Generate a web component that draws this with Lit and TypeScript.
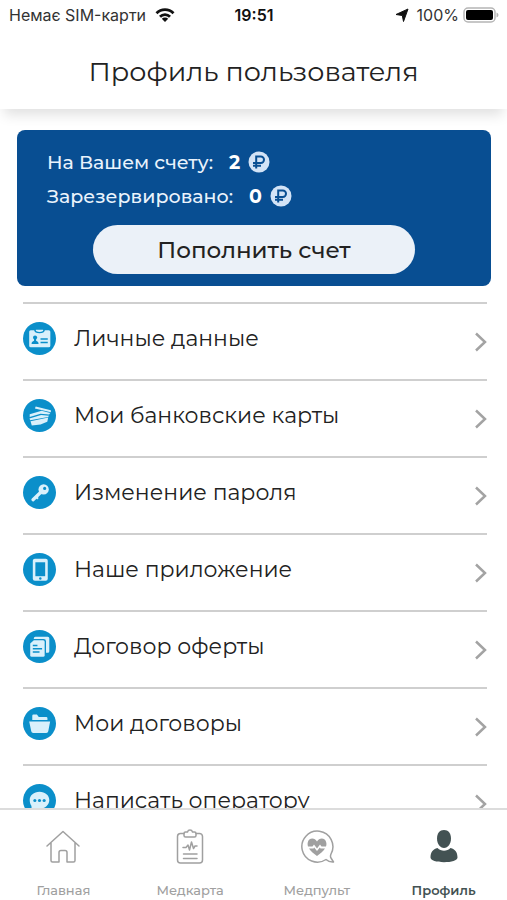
import { LitElement, html, css, svg } from "lit";
import { customElement } from "lit/decorators.js";
import { classMap } from "lit/directives/class-map.js";

const ruble = html`<svg class="ruble" viewBox="0 0 22 22" role="img" aria-label="рублей">
  <circle cx="11" cy="11" r="10.5" fill="#d3e3f6" />
  <path d="M8.200 17.500V5.600h4.600a3.200 3.200 0 0 1 0 6.400H5M5 14.800h8" fill="none" stroke="#084e92" stroke-width="2" />
</svg>`;

const rows = [
  {
    label: "Личные данные",
    art: svg`<path fill="#d9f0fb" d="M7.500 8h3.300c.4 1.800 1.800 3 5.200 3s4.800-1.200 5.200-3h3.800a1.500 1.500 0 0 1 1.500 1.500v13.500a1.500 1.500 0 0 1-1.500 1.500h-17.500A1.500 1.500 0 0 1 6 23V9.500A1.500 1.500 0 0 1 7.500 8z"/>
      <path fill="#d9f0fb" d="M12.500 7.500h7v1.200q-3.500 2-7 0z"/>
      <circle cx="11.700" cy="15" r="2" fill="#0b8fca"/><path fill="#0b8fca" d="M8.300 21.300c0-2 1.300-2.500 2.400-3v-2h2v2c1.100.5 2.400 1 2.400 3z"/>
      <path stroke="#0b8fca" stroke-width="1.500" d="M17 16.500h7M17 19.800h7"/>`,
  },
  {
    label: "Мои банковские карты",
    art: svg`<path fill="#d9f0fb" d="M12.300 7.200l14.700 3.600v2L11.500 9.300z"/>
      <path fill="#d9f0fb" d="M6.500 14.800l11.500-3.300 8.500 2-1.200 1.500-8.300-.8L6.500 17.500z"/>
      <path fill="#d9f0fb" d="M6.300 18.800l11.200-3.200 7.800.6-1 1.300-17.300 3.200z"/>
      <path fill="#d9f0fb" d="M7.300 21.500l17.200-3.500-1 4-6.500 2.800-8.500 1z"/>`,
  },
  {
    label: "Изменение пароля",
    art: svg`<circle cx="20" cy="13" r="5" fill="#d9f0fb"/>
      <path stroke="#d9f0fb" stroke-width="3.200" stroke-linecap="round" d="M17 16l-7.300 7"/>
      <path stroke="#d9f0fb" stroke-width="2" d="M13 20.500l1.500 1.500"/>
      <circle cx="21" cy="12" r="1.500" fill="#0b8fca"/>`,
  },
  {
    label: "Наше приложение",
    art: svg`<rect x="9.500" y="5.500" width="14.500" height="21.500" rx="2" fill="#d9f0fb"/>
      <path fill="#0b8fca" d="M12 9h9.500v13.500H12z"/><circle cx="16.800" cy="24.800" r="1.200" fill="#0b8fca"/>`,
  },
  {
    label: "Договор оферты",
    art: svg`<path fill="#d9f0fb" d="M12 6.500h12a1.500 1.500 0 0 1 1.500 1.500v12.500a1.500 1.500 0 0 1-1.500 1.500h-1.700V11a2.300 2.300 0 0 0-2.300-2.300h-9.500V8A1.500 1.500 0 0 1 12 6.500z"/>
      <path fill="#d9f0fb" d="M10.500 10H19.500a1.500 1.500 0 0 1 1.500 1.500v13a1.500 1.500 0 0 1-1.500 1.500h-11A1.500 1.500 0 0 1 7 24.500V13z"/>
      <path stroke="#0b8fca" stroke-width="1.400" d="M9.500 15h4.500M9.500 18.200h9M9.500 21.400h6.500"/>`,
  },
  {
    label: "Мои договоры",
    art: svg`<path fill="#d9f0fb" d="M9 12.500V8.500a1.200 1.200 0 0 1 1.200-1.200h3.300l1.800 2.500h7.200a1.200 1.200 0 0 1 1.200 1.200v1.500z"/>
      <path fill="#d9f0fb" d="M6 14h20.300l-1.800 9.500a2 2 0 0 1-2 1.700H10a2 2 0 0 1-2-1.700z"/>`,
  },
  {
    label: "Написать оператору",
    art: svg`<path fill="#d9f0fb" d="M16 7.500c5.500 0 9.500 3.500 9.500 8s-4 8.500-9.500 8.500c-1.500 0-2.500-.2-3.700-.6L7.500 25.500c.8-1.300 1-2.500.6-4.500C7 19.500 6.500 17.500 6.500 15.500c0-4.500 4-8 9.500-8z"/>
      <g fill="#0b8fca"><circle cx="11.500" cy="16" r="1.500"/><circle cx="16" cy="16" r="1.500"/><circle cx="20.500" cy="16" r="1.500"/></g>`,
  },
];

const tabs = [
  {
    label: "Главная",
    current: false,
    art: svg`<path d="M2 17L18 2.500l16 14.500M6 14v17.500a1.500 1.500 0 0 0 1.500 1.500h6.500V23.500a2 2 0 0 1 2-2h4a2 2 0 0 1 2 2v9.500h6.500a1.500 1.500 0 0 0 1.500-1.500V14"/>`,
  },
  {
    label: "Медкарта",
    current: false,
    art: svg`<path d="M12 4.500H8.500a3 3 0 0 0-3 3v23.500a3 3 0 0 0 3 3h19a3 3 0 0 0 3-3V7.500a3 3 0 0 0-3-3H24"/>
      <path d="M12 6.500V4.500a1.500 1.500 0 0 1 1.500-1.500h2a2.600 2.600 0 0 1 5 0h2A1.500 1.500 0 0 1 24 4.500v2a1.500 1.500 0 0 1-1.500 1.500h-9A1.500 1.500 0 0 1 12 6.500zM11.500 25h13.500M11.500 29.500h13.500M11 18.500h3l2-2.500 1.500 5 2-8 2 6.500 1.500-2.500h2"/>`,
  },
  {
    label: "Медпульт",
    current: false,
    art: svg`<path d="M27 30.500A15.500 15.500 0 1 1 32 25c-.6 1.500-1 2.500 0 4l2.500 4c-3 .3-5-.3-7.500-2.500z"/>
      <path class="solid" d="M9 17.500h4.500l1.500-2 3 4 3-4 1.500 2H27c.5-1.200.5-2.800.3-3.800C26.500 8.800 20.500 8 18 12.500 15.500 8 9.500 8.800 8.700 13.700c-.2 1-.1 2.600.3 3.800z"/>
      <path class="solid" d="M10 19.500h4.500l.7-1L18 22l2.800-3.500.7 1H26c-1.600 3-5 5-8 7.500-3-2.500-6.400-4.500-8-7.500z"/>`,
  },
  {
    label: "Профиль",
    current: true,
    art: svg`<path class="solid" d="M18 1c4.300 0 7 3.300 7 8.500s-3 9.500-7 9.500-7-4.300-7-9.500 2.700-8.500 7-8.500z"/>
      <path class="solid" d="M11.500 19c1.800 1.800 4 2.700 6.500 2.700s4.700-.9 6.500-2.700c4.700 1.200 7 4.500 7 9.500 0 3-6 4.700-13.500 4.700s-13.500-1.700-13.500-4.700c0-5 2.300-8.300 7-9.500z"/>`,
  },
];

@customElement("app-root")
export class AppRoot extends LitElement {
  static styles = css`
    :host {
      display: flex;
      flex-direction: column;
      height: 100vh;
      background: #fff;
      color: #222;
      font-family: Montserrat, Inter, "Noto Sans", sans-serif;
    }
    * {
      box-sizing: border-box;
    }
    .status {
      display: grid;
      grid-template-columns: 1fr auto 1fr;
      align-items: center;
      height: 30px;
      padding: 0 8px 0 9px;
      font: 400 16px/20px Inter, sans-serif;
      color: #333;
    }
    .side {
      display: flex;
      align-items: center;
      gap: 9px;
    }
    .end {
      justify-content: flex-end;
      gap: 4px;
    }
    .time {
      font-weight: 600;
      color: #111;
    }
    .wifi {
      width: 20px;
      height: 16px;
    }
    .arrow {
      width: 14px;
      height: 14px;
      margin-right: 4px;
    }
    .battery {
      width: 36px;
      height: 16px;
    }
    header {
      position: relative;
      padding: 24px 16px 19px;
      background: #fff;
      box-shadow: 0 10px 12px -4px rgba(0, 0, 0, 0.12);
    }
    h1 {
      margin: 0;
      text-align: center;
      font-size: 27px;
      line-height: 36px;
      font-weight: 400;
    }
    main {
      flex: 1;
      min-height: 0;
      overflow-y: auto;
      scrollbar-width: none;
      padding-top: 21px;
    }
    .card {
      margin: 0 16px 16px 17px;
      padding: 16px 30px 12px;
      border-radius: 8px;
      background: #084e92;
      color: #eaf3fc;
    }
    .line {
      display: flex;
      align-items: center;
      height: 32px;
      margin: 0 0 2px;
      font-size: 19px;
      font-weight: 500;
    }
    .line b {
      margin: 0 8px 0 16px;
      font-weight: 700;
      color: #fff;
    }
    .ruble {
      width: 22px;
      height: 22px;
    }
    .topup {
      display: block;
      width: 78%;
      height: 49px;
      margin: 13px auto 0;
      border: 0;
      border-radius: 25px;
      background: #ebf1f8;
      color: #222;
      font: inherit;
      font-size: 23px;
      font-weight: 500;
    }
    ul {
      margin: 0 20px 0 23px;
      padding: 0;
      list-style: none;
    }
    li {
      border-top: 2px solid #cfcfcf;
    }
    .row {
      display: flex;
      align-items: center;
      gap: 18px;
      height: 75px;
      padding-bottom: 6px;
      color: inherit;
      text-decoration: none;
      font-size: 22px;
    }
    .name {
      flex: 1;
    }
    .badge {
      width: 33px;
      height: 33px;
    }
    .chevron {
      width: 14px;
      height: 20px;
      margin-top: 7px;
    }
    nav {
      display: flex;
      height: 92px;
      border-top: 2px solid #dcdcdc;
      background: #fff;
    }
    .tab {
      flex: 1;
      display: flex;
      flex-direction: column;
      align-items: center;
      gap: 17px;
      padding-top: 19px;
      color: #a0a0a0;
      text-decoration: none;
      font-size: 13px;
      line-height: 16px;
      font-weight: 500;
    }
    .tab svg {
      width: 36px;
      height: 36px;
      fill: none;
      stroke: currentColor;
      stroke-width: 1.5;
      stroke-linejoin: round;
      stroke-linecap: round;
    }
    .tab .solid {
      fill: currentColor;
      stroke: none;
    }
    .current {
      color: #435253;
      font-weight: 600;
    }
  `;

  render() {
    return html`
      <div class="status">
        <div class="side">
          <span>Немає SIM-карти</span>
          <svg class="wifi" viewBox="0 0 20 16" fill="none" stroke="#111" stroke-width="2.8">
            <path d="M1.500 6.200a12 12 0 0 1 17 0M5 9.700a7 7 0 0 1 10 0" />
            <path fill="#111" stroke="none" d="M6.800 11.800a4.500 4.500 0 0 1 6.400 0L10 15z" />
          </svg>
        </div>
        <span class="time">19:51</span>
        <div class="side end">
          <svg class="arrow" viewBox="0 0 14 14"><path fill="#111" d="M13 1L8.500 13.500 7.300 7.500 1 6.500z" stroke="#111" stroke-linejoin="round" /></svg>
          <span>100%</span>
          <svg class="battery" viewBox="0 0 36 16">
            <rect x="1" y="1" width="31" height="14" rx="4" fill="none" stroke="#b5b5b5" stroke-width="1.500" />
            <rect x="3" y="3" width="27" height="10" rx="2" />
            <path fill="#b5b5b5" d="M33.500 5.500q2 .8 2 2.500t-2 2.500z" />
          </svg>
        </div>
      </div>
      <header><h1>Профиль пользователя</h1></header>
      <main>
        <section class="card">
          <p class="line">На Вашем счету: <b>2</b>${ruble}</p>
          <p class="line">Зарезервировано: <b>0</b>${ruble}</p>
          <button class="topup" type="button">Пополнить счет</button>
        </section>
        <ul>
          ${rows.map(
            (r) => html`<li>
              <a class="row" href="#">
                <svg class="badge" viewBox="0 0 32 32" fill="none" aria-hidden="true">
                  <circle cx="16" cy="16" r="16" fill="#0b8fca" />${r.art}
                </svg>
                <span class="name">${r.label}</span>
                <svg class="chevron" viewBox="0 0 14 20" fill="none" stroke="#a3a3a3" stroke-width="2.500" aria-hidden="true">
                  <path d="M3 1.500l9 8.500-9 8.500" />
                </svg>
              </a>
            </li>`
          )}
        </ul>
      </main>
      <nav>
        ${tabs.map(
          (t) => html`<a class=${classMap({ tab: true, current: t.current })} href="#">
            <svg viewBox="0 0 36 36" aria-hidden="true">${t.art}</svg>
            <span>${t.label}</span>
          </a>`
        )}
      </nav>
    `;
  }
}
